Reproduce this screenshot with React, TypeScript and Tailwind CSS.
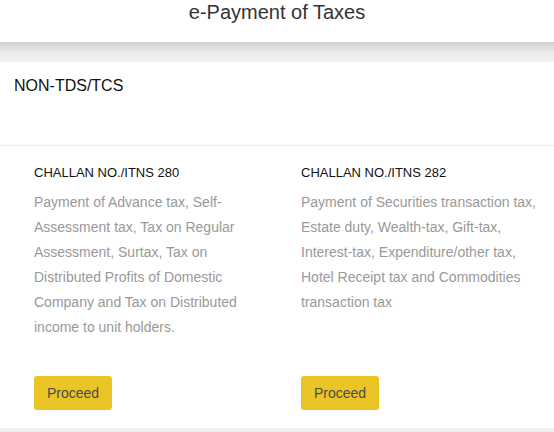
export default function App() {
  const challans = [
    {
      no: "CHALLAN NO./ITNS 280",
      desc: "Payment of Advance tax, Self-Assessment tax, Tax on Regular Assessment, Surtax, Tax on Distributed Profits of Domestic Company and Tax on Distributed income to unit holders.",
      width: "w-[267px] pr-[27px]",
    },
    {
      no: "CHALLAN NO./ITNS 282",
      desc: "Payment of Securities transaction tax, Estate duty, Wealth-tax, Gift-tax, Interest-tax, Expenditure/other tax, Hotel Receipt tax and Commodities transaction tax",
      width: "flex-1 pr-[10px]",
    },
  ];

  return (
    <div className="min-h-[432px] bg-[#f0f0f0] font-['Liberation_Sans',Arial,sans-serif]">
      {/* Header */}
      <header className="h-[42px] bg-white text-center">
        <h1 className="text-[20px] leading-[24px] text-[#333]">e-Payment of Taxes</h1>
      </header>

      {/* shadow strip */}
      <div className="h-[20px] bg-linear-to-b from-[#cfcfcf] via-[#ebebeb] to-[#f2f2f2]" />

      <div className="bg-white">
        <div className="h-[84px] border-b border-[#ececec] px-[14px] pt-[12px]">
          <h2 className="text-[16px] leading-[24px] text-[#111]">NON-TDS/TCS</h2>
        </div>

        <div className="flex pl-[34px] pt-[17px] pb-[18px]">
          {challans.map((c) => (
            <div key={c.no} className={c.width}>
              <div className="text-[13px] leading-[20px] text-[#111]">{c.no}</div>
              <p className="mt-[7px] h-[150px] text-[14px] leading-[25px] text-[#999]">{c.desc}</p>
              <button className="mt-[36px] h-[34px] rounded-[3px] bg-[#ebc526] px-[13px] text-[14px] text-[#4a4a4a]">
                Proceed
              </button>
            </div>
          ))}
        </div>
      </div>
    </div>
  );
}
